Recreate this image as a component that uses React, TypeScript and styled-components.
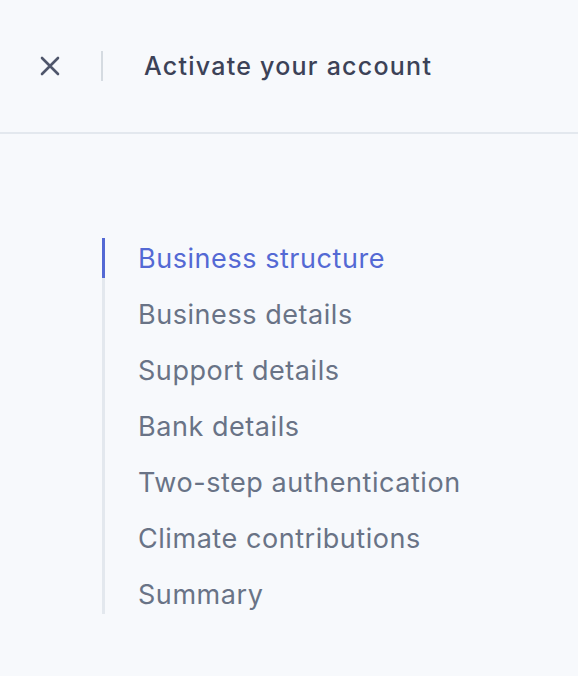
import styled, { createGlobalStyle } from "styled-components";

const GlobalStyle = createGlobalStyle`
  html, body {
    margin: 0;
    padding: 0;
    background: #f7f9fc;
  }
  body {
    font-family: "Inter", "Liberation Sans", sans-serif;
    -webkit-font-smoothing: antialiased;
  }
`;

const Page = styled.div`
  min-height: 676px;
  background: #f7f9fc;
`;

// Cabecera con botón de cerrar y título
const Header = styled.header`
  height: 134px;
  box-sizing: border-box;
  display: flex;
  align-items: center;
  padding-left: 38px;
  border-bottom: 2px solid #e3e8ee;
`;

const CloseButton = styled.button`
  width: 24px;
  height: 24px;
  padding: 0;
  border: none;
  background: transparent;
  display: flex;
  align-items: center;
  justify-content: center;
  color: #4f566b;
  cursor: pointer;
`;

const Divider = styled.span`
  width: 2px;
  height: 30px;
  background: #d5dbe1;
  margin: 0 41px 0 39px;
`;

const Title = styled.h1`
  margin: 0;
  font-size: 25px;
  font-weight: 500;
  color: #3c4257;
  letter-spacing: 1.25px;
`;

const Steps = styled.nav`
  padding: 104px 0 0 102px;
`;

const StepList = styled.ol`
  list-style: none;
  margin: 0;
  padding: 0;
  border-left: 3px solid #e3e8ee;
  display: flex;
  flex-direction: column;
  gap: 16px;
`;

const Step = styled.li<{ $active?: boolean }>`
  height: 40px;
  line-height: 42px;
  margin-left: -3px;
  padding-left: 33px;
  border-left: 3px solid ${(p) => (p.$active ? "#5469d4" : "transparent")};
  font-size: 27px;
  font-weight: 400;
  letter-spacing: 0.55px;
  color: ${(p) => (p.$active ? "#5469d4" : "#697386")};
  white-space: nowrap;
`;

const steps = [
  "Business structure",
  "Business details",
  "Support details",
  "Bank details",
  "Two-step authentication",
  "Climate contributions",
  "Summary",
];

export default function App() {
  return (
    <Page>
      <GlobalStyle />
      <Header>
        <CloseButton aria-label="Close">
          <svg width="20" height="20" viewBox="0 0 20 20" fill="none">
            <path
              d="M2 2L18 18M18 2L2 18"
              stroke="currentColor"
              strokeWidth="2.6"
              strokeLinecap="round"
            />
          </svg>
        </CloseButton>
        <Divider />
        <Title>Activate your account</Title>
      </Header>
      <Steps>
        <StepList>
          {steps.map((s, i) => (
            <Step key={s} $active={i === 0}>
              {s}
            </Step>
          ))}
        </StepList>
      </Steps>
    </Page>
  );
}
